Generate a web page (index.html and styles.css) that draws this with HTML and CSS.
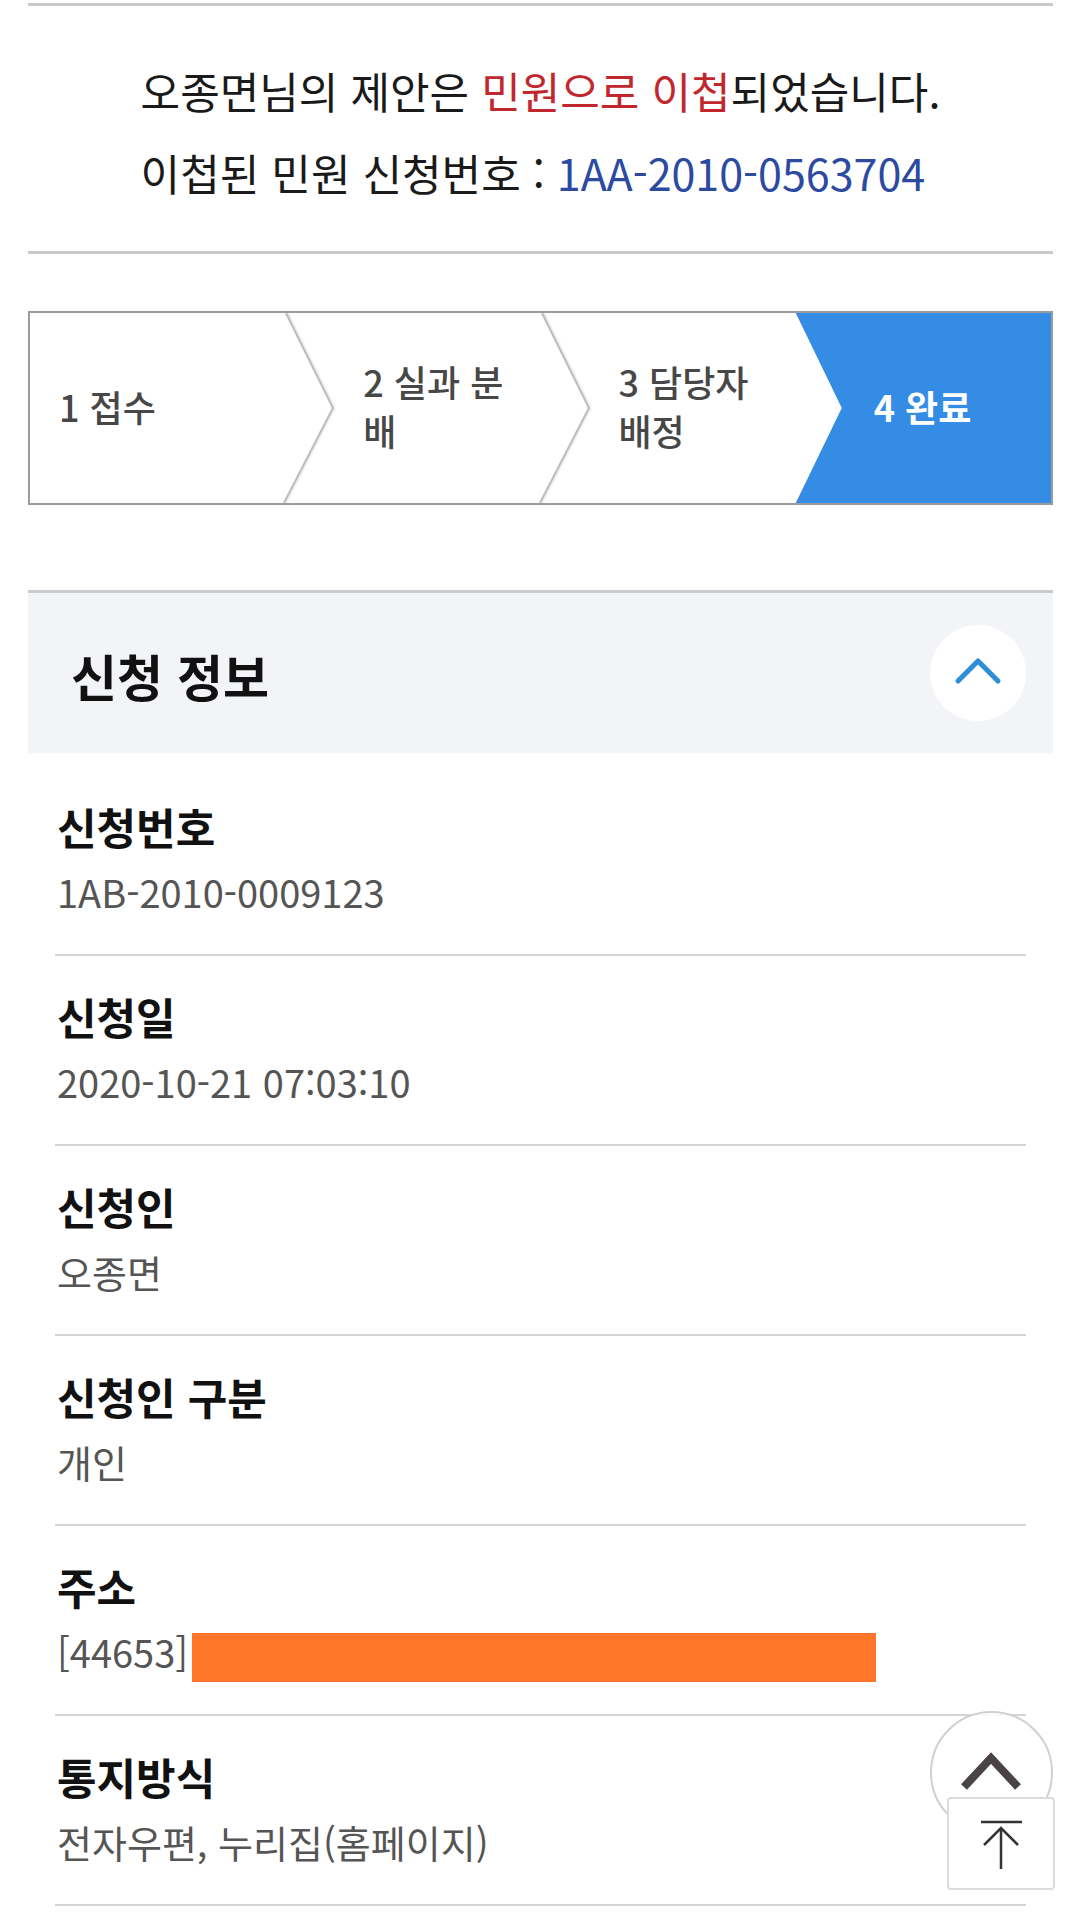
FILE: index.html
```html
<!DOCTYPE html>
<html lang="ko">
<head>
    <meta charset="UTF-8">
    <meta name="viewport" content="width=device-width, initial-scale=1.0">
    <title>신청 정보</title>
    <link rel="stylesheet" href="styles.css">
</head>
<body>
    <div class="page">
        <section class="notice">
            <p class="notice-text">오종면님의 제안은 <em class="hl-red">민원으로 이첩</em>되었습니다.<br>이첩된 민원 신청번호 : <span class="hl-blue">1AA-2010-0563704</span></p>
        </section>

        <ol class="steps">
            <li class="step"><span>1 접수</span></li>
            <li class="step">
                <svg class="step-arrow" width="52" height="190"><polyline points="1,0 48,95 -1,190" /></svg>
                <span>2 실과 분배</span>
            </li>
            <li class="step">
                <svg class="step-arrow" width="52" height="190"><polyline points="1,0 48,95 -1,190" /></svg>
                <span>3 담당자 배정</span>
            </li>
            <li class="step is-current"><span>4 완료</span></li>
        </ol>

        <section class="info">
            <div class="info-head">
                <h2>신청 정보</h2>
                <button class="toggle" type="button">
                    <svg width="96" height="96"><polyline points="28,56 48,36 68,56" /></svg>
                </button>
            </div>
            <dl class="info-list">
                <div class="info-row">
                    <dt>신청번호</dt>
                    <dd>1AB-2010-0009123</dd>
                </div>
                <div class="info-row">
                    <dt>신청일</dt>
                    <dd>2020-10-21 07:03:10</dd>
                </div>
                <div class="info-row">
                    <dt>신청인</dt>
                    <dd>오종면</dd>
                </div>
                <div class="info-row">
                    <dt>신청인 구분</dt>
                    <dd>개인</dd>
                </div>
                <div class="info-row">
                    <dt>주소</dt>
                    <dd>[44653]<span class="masked"></span></dd>
                </div>
                <div class="info-row">
                    <dt>통지방식</dt>
                    <dd>전자우편, 누리집(홈페이지)</dd>
                </div>
            </dl>
        </section>
    </div>

    <button class="float-up" type="button">
        <svg width="123" height="123"><polyline points="34,76 61,47 88,76" /></svg>
    </button>
    <button class="float-top" type="button">
        <svg width="108" height="93">
            <line x1="34" y1="25" x2="75" y2="25" />
            <line x1="54" y1="31" x2="54" y2="72" />
            <polyline points="37,48 54,31 71,48" />
        </svg>
    </button>
</body>
</html>
```

FILE: styles.css
```css
body {
    margin: 0;
    background: #fff;
    font-family: "Noto Sans CJK KR", "Noto Sans", sans-serif;
    color: #111;
}
.page {
    padding: 3px 27px 0 28px;
}

/* 이첩 안내 */
.notice {
    border-top: 3px solid #c8cacd;
    border-bottom: 3px solid #c8cacd;
    padding: 43px 0 38px;
    text-align: center;
}
.notice-text {
    display: inline-block;
    margin: 0;
    text-align: left;
    font-size: 43px;
    line-height: 82px;
    color: #1a1a1a;
}
.hl-red {
    font-style: normal;
    color: #c1272d;
}
.hl-blue {
    color: #2b4aa0;
}

/* 처리 단계 */
.steps {
    list-style: none;
    margin: 57px 0 0;
    padding: 0;
    display: grid;
    grid-template-columns: repeat(4, 1fr);
    height: 190px;
    border: 2px solid #9c9c9c;
}
.step {
    position: relative;
    display: flex;
    align-items: center;
    padding: 0 12px 4px 78px;
    font-size: 36px;
    font-weight: 500;
    line-height: 49px;
    color: #474747;
}
.step:first-child {
    padding-left: 29px;
}
.step-arrow {
    position: absolute;
    left: 0;
    top: 0;
    overflow: visible;
}
.step-arrow polyline {
    fill: none;
    stroke: #bdbdbd;
    stroke-width: 2;
    filter: drop-shadow(1px 0 1px rgba(0, 0, 0, 0.12));
}
.step.is-current {
    background: #348ce4;
    color: #fff;
    font-weight: 700;
    clip-path: polygon(0 0, 100% 0, 100% 100%, 0 100%, 46px 50%);
}

/* 신청 정보 */
.info {
    margin-top: 85px;
}
.info-head {
    display: flex;
    align-items: center;
    justify-content: space-between;
    height: 160px;
    padding: 0 27px 0 43px;
    background: #f3f4f8;
    border-top: 3px solid #c7cacf;
}
.info-head h2 {
    margin: 0;
    padding-top: 4px;
    font-size: 50px;
    font-weight: 700;
    line-height: 70px;
    color: #111;
}
.toggle {
    width: 96px;
    height: 96px;
    padding: 0;
    border: none;
    border-radius: 50%;
    background: #fff;
}
.toggle svg {
    display: block;
}
.toggle polyline {
    fill: none;
    stroke: #2b8ed6;
    stroke-width: 5;
    stroke-linecap: round;
    stroke-linejoin: round;
}
.info-list {
    margin: 0;
    padding: 13px 27px 0;
}
.info-row {
    padding: 30px 2px 32px;
    border-bottom: 2px solid #d4d4d4;
}
.info-row dt {
    font-size: 43px;
    font-weight: 700;
    line-height: 60px;
    color: #111;
}
.info-row dd {
    margin: 6px 0 0;
    font-size: 38px;
    line-height: 60px;
    color: #555;
}
.masked {
    display: inline-block;
    width: 684px;
    height: 49px;
    margin-left: 4px;
    vertical-align: middle;
    background: #fe7629;
}

/* 플로팅 버튼 */
.float-up,
.float-top {
    position: fixed;
    padding: 0;
    background: rgba(255, 255, 255, 0.85);
}
.float-up {
    right: 27px;
    bottom: 78px;
    width: 123px;
    height: 123px;
    border: 2px solid #d0d0d0;
    border-radius: 50%;
}
.float-up svg,
.float-top svg {
    position: absolute;
    left: -2px;
    top: -2px;
}
.float-up polyline {
    fill: none;
    stroke: #4a4343;
    stroke-width: 8;
}
.float-top {
    right: 25px;
    bottom: 22px;
    width: 108px;
    height: 93px;
    border: 2px solid #dcdcdc;
    border-radius: 4px;
    background: #fff;
}
.float-top line,
.float-top polyline {
    fill: none;
    stroke: #333;
    stroke-width: 2.5;
}
```
